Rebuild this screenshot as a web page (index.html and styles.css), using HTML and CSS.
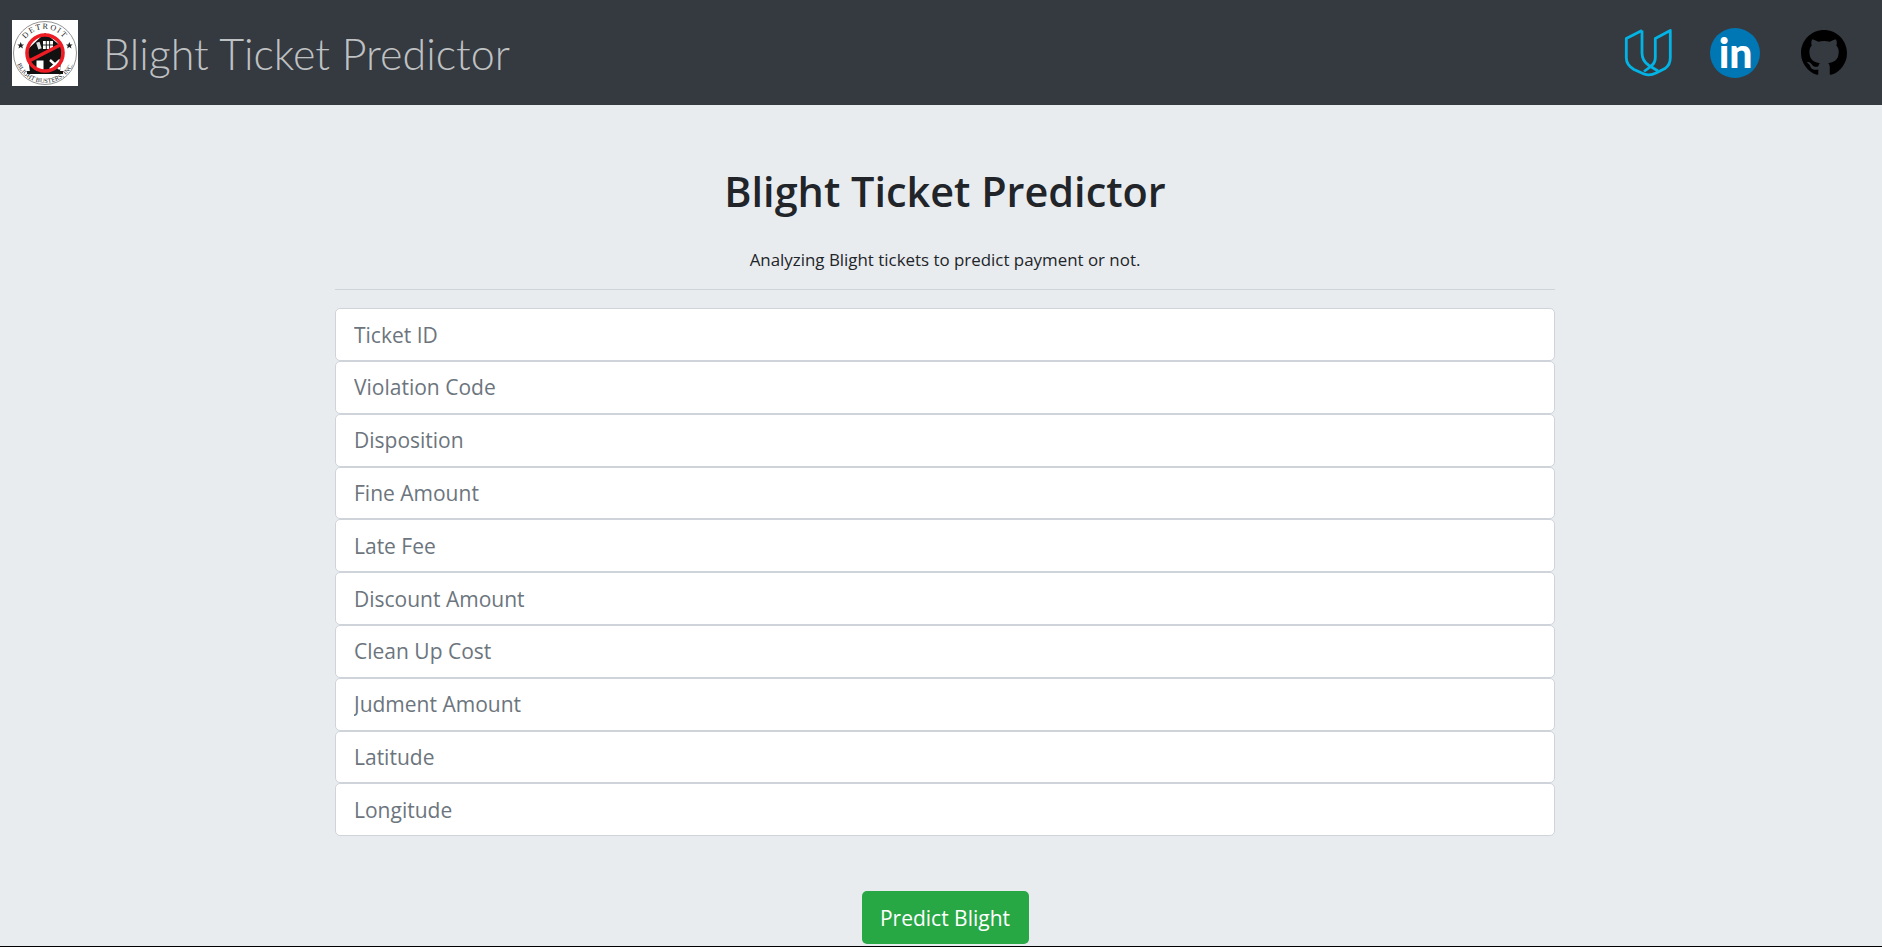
FILE: index.html
```html
<!DOCTYPE html>
<html lang="en">
<head>
<meta charset="utf-8">
<title>Blight Ticket Predictor</title>
<link rel="stylesheet" href="styles.css">
</head>
<body>
<header class="navbar">
  <a class="brand" href="#">
    <svg class="logo" viewBox="0 0 66 66" role="img" aria-label="Detroit Blight Busters logo">
      <rect width="66" height="66" fill="#fff"/>
      <circle cx="33" cy="33" r="31.5" fill="#fff" stroke="#666" stroke-width="0.7"/>
      <defs>
        <path id="arcTop" d="M9 33 A24 24 0 0 1 57 33"/>
        <path id="arcBottom" d="M3 27 A30.5 30.5 0 1 0 63 27"/>
      </defs>
      <text class="logo-arc logo-arc-top"><textPath href="#arcTop" startOffset="50%" text-anchor="middle">DETROIT</textPath></text>
      <path d="M15 30 L33 13 L50 27 L48 52 L18 52 Z" fill="#111"/>
      <rect x="31" y="21" width="10" height="8" fill="#fff"/>
      <path d="M34.300 21v8M37.600 21v8M31 25h10" stroke="#111" stroke-width="0.9"/>
      <rect x="25" y="22" width="3.500" height="7" fill="#ddd" transform="rotate(-18 27 25)"/>
      <rect x="24" y="40" width="8" height="12" fill="#fff" stroke="#111"/>
      <path d="M38 40l10 9M48 40l-10 9" stroke="#fff" stroke-width="2.400"/>
      <path d="M15 51h36v3H15z" fill="#111"/>
      <circle cx="33" cy="33" r="18" fill="none" stroke="#ee1c25" stroke-width="3.600"/>
      <path d="M17 41 L50 24" stroke="#ee1c25" stroke-width="3.600"/>
      <path d="M8.700 22l1 2.400 2.400.1-1.900 1.500.7 2.400-2.200-1.400-2.200 1.400.7-2.400-1.900-1.500 2.400-.1zM57.300 22l1 2.400 2.400.1-1.900 1.500.7 2.400-2.200-1.400-2.200 1.400.7-2.400-1.900-1.500 2.400-.1z" fill="#222"/>
      <text class="logo-arc"><textPath href="#arcBottom" startOffset="50%" text-anchor="middle">BLIGHT BUSTERS, INC.</textPath></text>
    </svg>
    <span class="brand-name">Blight Ticket Predictor</span>
  </a>
  <nav class="social">
    <a class="social-link" href="#" aria-label="Udacity">
      <svg class="icon-udacity" viewBox="0 0 52 52">
        <path d="M20 3.500 L4.300 11.500 V30.800 Q4.300 38 12 42.500 L22 47 Q28 49 34 46 L43 41.500 Q48.300 38 48.300 30.800 V3.500 L33.300 11.500 V30.800 Q33.300 36.500 28 40 L22 44.500" fill="none" stroke="#02b3e4" stroke-width="2.800" stroke-linejoin="round"/>
        <path d="M20 3.500 V26 Q20 34 27 38.500 L36 44" fill="none" stroke="#02b3e4" stroke-width="2.800" stroke-linejoin="round"/>
      </svg>
    </a>
    <a class="social-link" href="#" aria-label="LinkedIn">
      <svg class="icon-linkedin" viewBox="0 0 50 50">
        <circle cx="25" cy="25" r="25" fill="#0077b5"/>
        <text class="linkedin-text" x="8.700" y="39.500">in</text>
      </svg>
    </a>
    <a class="social-link" href="#" aria-label="GitHub">
      <svg class="icon-github" viewBox="0 0 16 16">
        <path d="M8 0C3.58 0 0 3.58 0 8c0 3.54 2.29 6.53 5.47 7.59.4.07.55-.17.55-.38 0-.19-.01-.82-.01-1.49-2.01.37-2.53-.49-2.69-.94-.09-.23-.48-.94-.82-1.13-.28-.15-.68-.52-.01-.53.63-.01 1.08.58 1.23.82.72 1.21 1.87.87 2.33.66.07-.52.28-.87.51-1.07-1.78-.2-3.64-.89-3.64-3.95 0-.87.31-1.59.82-2.15-.08-.2-.36-1.02.08-2.12 0 0 .67-.21 2.2.82.64-.18 1.32-.27 2-.27.68 0 1.36.09 2 .27 1.53-1.04 2.2-.82 2.2-.82.44 1.1.16 1.92.08 2.12.51.56.82 1.27.82 2.15 0 3.07-1.87 3.75-3.65 3.95.29.25.54.73.54 1.48 0 1.07-.01 1.93-.01 2.2 0 .21.15.46.55.38A8.013 8.013 0 0016 8c0-4.42-3.58-8-8-8z" fill="#000"/>
      </svg>
    </a>
  </nav>
</header>
<main class="content">
  <h1 class="title">Blight Ticket Predictor</h1>
  <p class="lead">Analyzing Blight tickets to predict payment or not.</p>
  <hr class="rule">
  <form class="ticket-form">
    <div class="fields">
      <input class="field" type="text" placeholder="Ticket ID">
      <input class="field" type="text" placeholder="Violation Code">
      <input class="field" type="text" placeholder="Disposition">
      <input class="field" type="text" placeholder="Fine Amount">
      <input class="field" type="text" placeholder="Late Fee">
      <input class="field" type="text" placeholder="Discount Amount">
      <input class="field" type="text" placeholder="Clean Up Cost">
      <input class="field" type="text" placeholder="Judment Amount">
      <input class="field" type="text" placeholder="Latitude">
      <input class="field" type="text" placeholder="Longitude">
    </div>
    <button class="predict" type="button">Predict Blight</button>
  </form>
</main>
<div class="bottom-line"></div>
</body>
</html>
```
FILE: styles.css
```css
* { box-sizing: border-box; }
html, body { height: 100%; }
body {
  margin: 0;
  display: flex;
  flex-direction: column;
  overflow: hidden;
  background: #e9ecef;
  color: #212529;
  font-family: "Open Sans", "Noto Sans", "Liberation Sans", sans-serif;
}
.navbar {
  flex: none;
  height: 105px;
  background: #343a40;
  display: flex;
  align-items: center;
  justify-content: space-between;
  padding: 0 35px 0 12px;
}
.brand {
  display: flex;
  align-items: center;
  gap: 25px;
  text-decoration: none;
}
.logo { width: 66px; height: 66px; display: block; }
.logo-arc { font-family: "Liberation Serif", serif; font-size: 6.4px; fill: #222; letter-spacing: 0.1px; }
.logo-arc-top { font-size: 8px; letter-spacing: 1.6px; }
.brand-name {
  font-family: Lato, "Open Sans", sans-serif;
  font-weight: 300;
  font-size: 43px;
  line-height: 1.2;
  padding-top: 3px;
  color: rgba(255, 255, 255, 0.7);
}
.social { display: flex; align-items: center; gap: 41px; }
.social-link { display: block; line-height: 0; }
.icon-udacity { width: 52px; height: 52px; display: block; margin-right: -5px; }
.icon-linkedin { width: 50px; height: 50px; display: block; }
.icon-github { width: 46px; height: 46px; display: block; }
.linkedin-text {
  font-family: Lato, "Liberation Sans", sans-serif;
  font-weight: 900;
  font-size: 41px;
  fill: #fff;
}
.content {
  flex: 1;
  width: 1220px;
  margin: 0 0 0 335px;
  min-height: 0;
  display: flex;
  flex-direction: column;
}
.title {
  margin: 61.5px 0 0;
  text-align: center;
  font-size: 41.4px;
  font-weight: 600;
  line-height: 1.2;
}
.lead {
  margin: 31px 0 0;
  text-align: center;
  font-size: 16.9px;
  line-height: 1.5;
}
.rule {
  width: 100%;
  margin: 16px 0 18.7px;
  border: 0;
  border-top: 1px solid #ced4da;
}
.ticket-form { display: flex; flex-direction: column; align-items: center; }
.fields { width: 100%; display: flex; flex-direction: column; }
.field {
  display: block;
  width: 100%;
  height: 52.8px;
  padding: 0 18px;
  border: 1px solid #ced4da;
  border-radius: 5px;
  background: #fff;
  font: inherit;
  font-size: 21px;
  color: #495057;
}
.field::placeholder { color: #6c757d; opacity: 1; }
.predict {
  margin-top: 54.8px;
  width: 167px;
  height: 53px;
  border: 0;
  border-radius: 5px;
  background: #28a745;
  color: #fff;
  font: inherit;
  font-size: 21px;
}
.bottom-line { flex: none; height: 1px; background: #000; }
```
